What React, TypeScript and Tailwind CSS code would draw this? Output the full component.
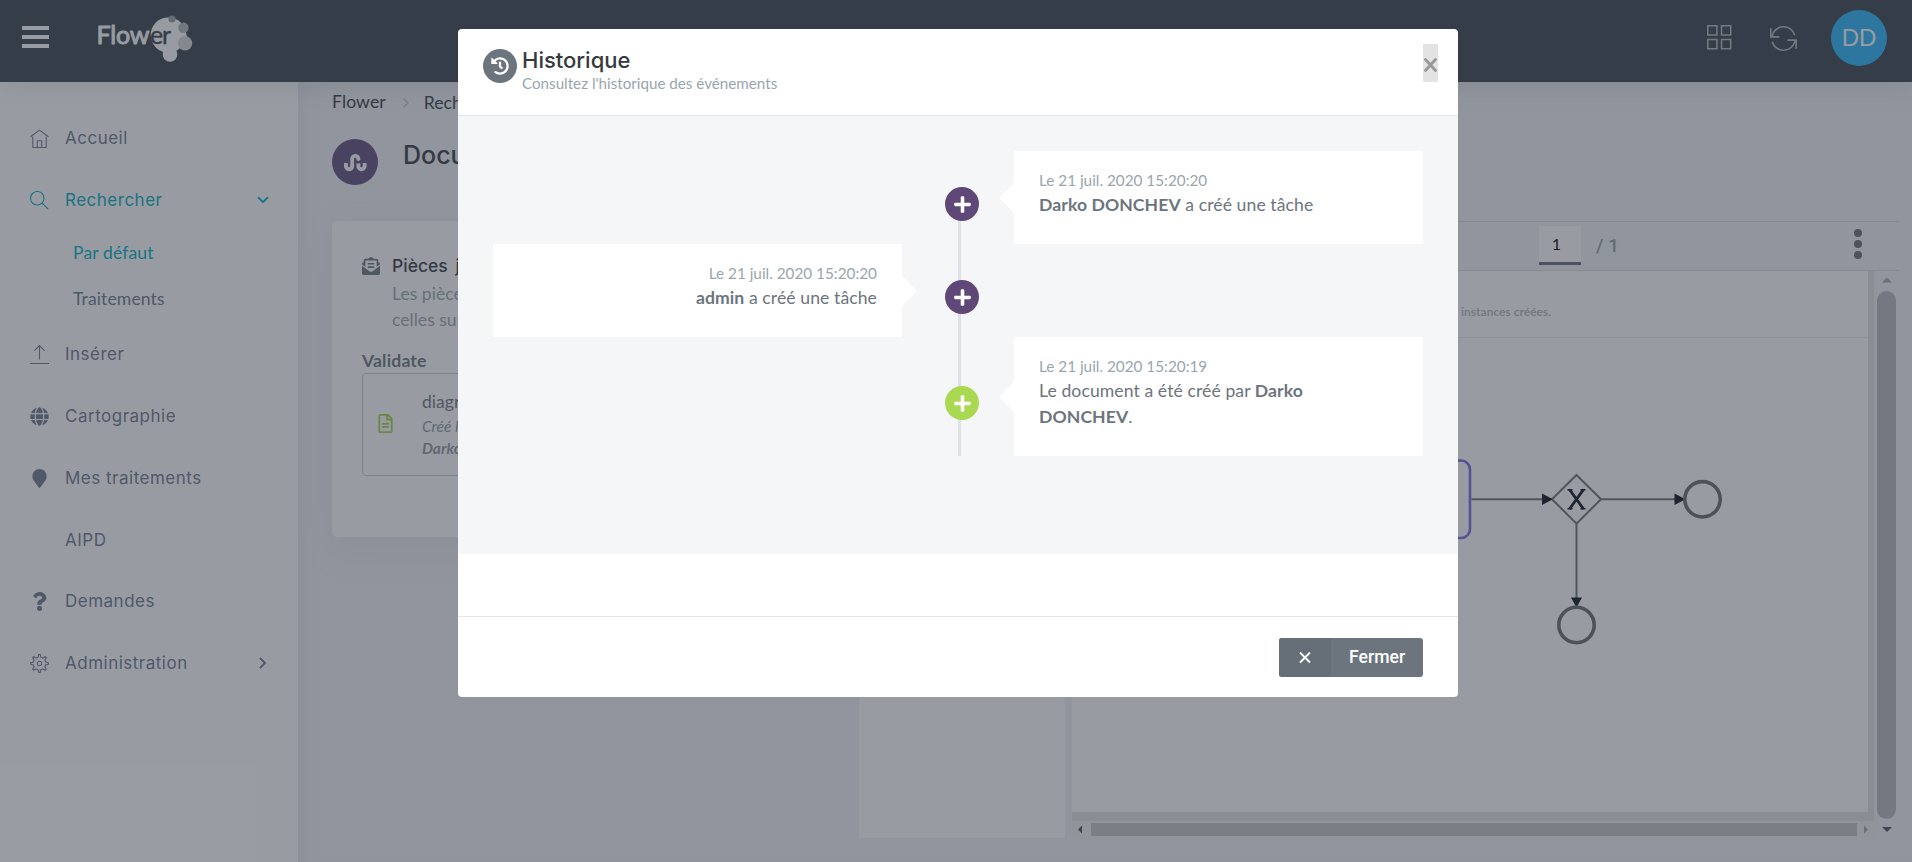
import React from 'react';
import {
  TfiHome,
  TfiSearch,
  TfiUpload,
  TfiSettings,
  TfiLayoutGrid2,
  TfiReload,
} from 'react-icons/tfi';
import {
  FaGlobe,
  FaMapMarker,
  FaQuestion,
  FaStumbleupon,
  FaEnvelopeOpenText,
  FaRegFileAlt,
  FaHistory,
  FaPlus,
} from 'react-icons/fa';

type NavItem = {
  label: string;
  icon: React.ReactNode;
  height: string;
  active?: boolean;
  chevron?: 'down' | 'right';
  children?: { label: string; active?: boolean }[];
};

const navItems: NavItem[] = [
  { label: 'Accueil', icon: <TfiHome size={19} />, height: 'h-[62px]' },
  {
    label: 'Rechercher',
    icon: <TfiSearch size={19} />,
    height: 'h-[62px]',
    active: true,
    chevron: 'down',
    children: [{ label: 'Par défaut', active: true }, { label: 'Traitements' }],
  },
  { label: 'Insérer', icon: <TfiUpload size={19} />, height: 'h-[62px]' },
  { label: 'Cartographie', icon: <FaGlobe size={19} />, height: 'h-[62px]' },
  { label: 'Mes traitements', icon: <FaMapMarker size={19} />, height: 'h-[62px]' },
  { label: 'AIPD', icon: null, height: 'h-[61px]' },
  { label: 'Demandes', icon: <FaQuestion size={19} />, height: 'h-[62px]' },
  { label: 'Administration', icon: <TfiSettings size={19} />, height: 'h-[62px]', chevron: 'right' },
];

function Logo() {
  return (
    <svg width="100" height="60" viewBox="0 0 100 60" className="ml-[47px]">
      <circle cx="72.3" cy="30" r="17.6" fill="#fff" />
      <circle cx="81" cy="32" r="10" fill="#fff" />
      <circle cx="74" cy="49.5" r="7.3" fill="#fff" />
      <circle cx="76" cy="14" r="3.6" fill="#969ca5" />
      <circle cx="87.4" cy="22.7" r="5.2" fill="#b4b6ba" />
      <circle cx="89" cy="38.3" r="7.2" fill="#d8d8d8" />
      <text x="0.500" y="38.500" textLength="53" fontSize="25" fill="#fff" stroke="#fff" strokeWidth="0.900" strokeLinejoin="round" className="font-['Lato',sans-serif]">
        Flow
      </text>
      <text x="54" y="38.500" textLength="21" fontSize="25" fill="#38414a" stroke="#38414a" strokeWidth="0.400" className="font-['Lato',sans-serif]">
        er
      </text>
    </svg>
  );
}

function Header() {
  return (
    <header className="relative z-10 flex h-[82px] shrink-0 items-start bg-[#38414a] shadow-[0_4px_24px_rgba(56,65,74,0.12)]">
      <div className="ml-[22px] mt-[26px] flex w-[27px] flex-col gap-[5px]">
        <span className="h-1 bg-white" />
        <span className="h-1 bg-white" />
        <span className="h-1 bg-white" />
      </div>
      <div className="mt-[5px]">
        <Logo />
      </div>
      <div className="ml-auto flex items-center pr-[25px] pt-[10px] text-[#b6b8bb]">
        <TfiLayoutGrid2 size={26} />
        <TfiReload size={27} className="ml-[37px]" />
        <span className="ml-[34px] flex size-[56px] items-center justify-center rounded-full bg-[#26b2f8] font-['Liberation_Sans',sans-serif] text-[24px] text-white">
          DD
        </span>
      </div>
    </header>
  );
}

function Chevron({ dir }: { dir: 'down' | 'right' }) {
  return (
    <svg width="12" height="12" viewBox="0 0 12 12" fill="none" stroke="currentColor" strokeWidth="1.9">
      <path d={dir === 'down' ? 'M1 3.2l5 5 5-5' : 'M3 1l5 5-5 5'} />
    </svg>
  );
}

function Sidebar() {
  return (
    <nav className="w-[298px] shrink-0 bg-white pt-[25px] font-['Inter',sans-serif] text-[17px] tracking-[0.5px] text-[#6e768e]">
      {navItems.map((item) => (
        <div key={item.label}>
          <div className={`flex items-center pl-[30px] pr-[29px] ${item.height} ${item.active ? 'text-[#00acc1]' : ''}`}>
            <span className="flex w-[19px] justify-center">{item.icon}</span>
            <span className="ml-4 pt-[2px]">{item.label}</span>
            {item.chevron && (
              <span className="ml-auto">
                <Chevron dir={item.chevron} />
              </span>
            )}
          </div>
          {item.children?.map((child) => (
            <div
              key={child.label}
              className={`flex h-[46px] items-center pb-[2px] pl-[73px] font-['Lato',sans-serif] text-[17.6px] tracking-[0.1px] ${child.active ? 'text-[#00acc1]' : ''}`}
            >
              {child.label}
            </div>
          ))}
        </div>
      ))}
    </nav>
  );
}

function AttachmentsCard() {
  return (
    <section className="mt-[36px] h-[316px] w-[500px] rounded-[5px] bg-white pl-[30px] pt-[30px] shadow-[0_12px_35px_rgba(154,161,171,0.15)]">
      <div className="flex h-[30px] items-center">
        <FaEnvelopeOpenText size={18} className="text-[#6c757d]" />
        <h2 className="ml-[12px] font-['Inter',sans-serif] text-[17.5px] font-medium text-[#343a40]">
          Pièces <span className="ml-[3px]">jointes</span>
        </h2>
      </div>
      <p className="ml-[30px] leading-[26px] text-[#98a6ad]">
        Les pièces
        <br />
        celles sur
      </p>
      <p className="mt-[15px] h-[26px] font-bold leading-[26px] tracking-[0.15px]">Validate</p>
      <div className="mt-[-1px] flex h-[103px] w-[440px] rounded border border-[#c5cbe0] pl-[13px]">
        <FaRegFileAlt size={19} className="mt-[40px] text-[#a3d44f]" />
        <div className="ml-[27px] pt-[15px]">
          <p className="leading-[26px]">diagramme</p>
          <p className="text-[15.5px] italic leading-[22px] text-[#8d979e]">
            Créé le
            <br />
            <b>Darko DONCHEV</b>
          </p>
        </div>
      </div>
    </section>
  );
}

function Diagram() {
  return (
    <svg width="410" height="220" viewBox="1458 440 410 220" fill="none" className="ml-auto">
      <rect x="1340" y="460.5" width="130" height="77.5" rx="9" stroke="#7a68e4" strokeWidth="2.6" />
      <g stroke="#6d7177" strokeWidth="2">
        <path d="M1471.500 499.300H1545" />
        <path d="M1601 499.300H1678" />
        <path d="M1576.500 524V600" />
        <path d="M1576.500 475l24.500 24.300-24.500 24.300-24.500-24.300z" />
      </g>
      <g fill="#0a0f1a">
        <path d="M1542 493.500l11 5.800-11 5.800z" />
        <path d="M1674.500 493.500l11 5.800-11 5.800z" />
        <path d="M1571 597.500h11l-5.500 10z" />
      </g>
      <path d="M1569.500 489.500l14 19.500M1583.500 489.500l-14 19.500" stroke="#0a0f1a" strokeWidth="2.900" />
      <path d="M1567.500 489.700h5M1580.500 489.700h5M1567.500 508.700h5M1580.500 508.700h5" stroke="#0a0f1a" strokeWidth="1.500" />
      <g stroke="#676a6e" strokeWidth="3.600">
        <circle cx="1702.500" cy="499.300" r="17.700" />
        <circle cx="1576.500" cy="625" r="17.700" />
      </g>
    </svg>
  );
}

function Viewer() {
  return (
    <section className="flex h-[618px] w-[827px] flex-col">
      <div className="flex h-[50px] items-start border-y border-[#dcdddf]">
        <div className="ml-[467px] mt-[4px] flex h-[39px] w-[42px] items-center justify-center border-b-[3px] border-[#676c74] bg-white pr-[7px] text-base text-black">
          1
        </div>
        <span className="ml-[15px] mt-[10px] font-['Roboto',sans-serif] text-[19px] font-medium leading-[28px] text-[#9a9ca0]">/ 1</span>
        <div className="ml-auto mr-[37px] mt-[7px] flex flex-col gap-[3px]">
          <i className="size-2 rounded-full bg-[#676c74]" />
          <i className="size-2 rounded-full bg-[#676c74]" />
          <i className="size-2 rounded-full bg-[#676c74]" />
        </div>
      </div>
      <div className="flex flex-1">
        <div className="flex flex-1 flex-col">
          <div className="flex h-[550px] border-b-[9px] border-r-[6px] border-[#e2e2e2] bg-white">
            <div className="flex flex-1 flex-col">
              <div className="flex h-[67px] items-center border-b border-[#edeef0] pl-[389px] pt-[16px] text-[12px] font-bold text-[#b8bac0]">
                instances créées.
              </div>
              <div className="pt-[102px]">
                <Diagram />
              </div>
            </div>
          </div>
          <div className="flex h-[17px] items-center bg-[#f1f1f1]">
            <svg width="19" height="13" viewBox="0 0 19 13" fill="#505050">
              <path d="M10 2.500v8L6 6.500z" />
            </svg>
            <div className="h-[13px] w-[766px] bg-[#c4c4c4]" />
            <svg width="17" height="13" viewBox="0 0 17 13" fill="#a3a3a3">
              <path d="M7 2.500v8l4-4z" />
            </svg>
          </div>
        </div>
        <div className="flex w-[25px] flex-col items-center bg-[#f1f1f4]">
          <svg width="25" height="20" viewBox="0 0 25 20" fill="#a3a5ab">
            <path d="M8 11.500h10L13 6.500z" />
          </svg>
          <div className="w-[19px] flex-1 rounded-full bg-[#b4b6be]" />
          <svg width="25" height="20" viewBox="0 0 25 20" fill="#50525a">
            <path d="M8 8h10l-5 5z" />
          </svg>
        </div>
      </div>
    </section>
  );
}

function Content() {
  return (
    <main className="flex flex-1 bg-[#f0f1f5] pl-[34px] shadow-[inset_20px_0_25px_-20px_rgba(100,105,120,0.12)]">
      <div className="w-[527px] shrink-0">
        <div className="flex h-[40px] items-center pt-[1px] text-[#343a40]">
          <span className="tracking-[0.1px]">Flower</span>
          <span className="ml-[16px] text-[#c4c8d0]">
            <svg width="8" height="12" viewBox="0 0 8 12" fill="none" stroke="currentColor" strokeWidth="1.6">
              <path d="M1.500 1.500l4.500 4.500-4.500 4.500" />
            </svg>
          </span>
          <span className="ml-[14px] pt-[2px]">Rechercher</span>
        </div>
        <div className="mt-[17px] flex h-[46px] items-start">
          <span className="flex size-[46px] items-center justify-center rounded-full bg-[#604a7b] text-white">
            <FaStumbleupon size={23} />
          </span>
          <h1 className="-mt-[1px] ml-[25px] font-['Inter',sans-serif] text-[25px] font-medium leading-[34px] text-[#343a40]">Document</h1>
        </div>
        <AttachmentsCard />
      </div>
      <div className="mt-[139px] flex h-[618px]">
        <div className="mr-[7px] mt-[50px] h-[567px] w-[206px] bg-white" />
        <Viewer />
      </div>
    </main>
  );
}

type TimelineEvent = {
  side: 'left' | 'right';
  color: string;
  date: string;
  body: React.ReactNode;
};

const events: TimelineEvent[] = [
  {
    side: 'right',
    color: 'bg-[#5f4778]',
    date: 'Le 21 juil. 2020 15:20:20',
    body: (
      <>
        <b>Darko DONCHEV</b> a créé une tâche
      </>
    ),
  },
  {
    side: 'left',
    color: 'bg-[#5f4778]',
    date: 'Le 21 juil. 2020 15:20:20',
    body: (
      <>
        <b>admin</b> a créé une tâche
      </>
    ),
  },
  {
    side: 'right',
    color: 'bg-[#a8d951]',
    date: 'Le 21 juil. 2020 15:20:19',
    body: (
      <>
        Le document a été créé par <b>Darko</b>
        <br />
        <b>DONCHEV</b>.
      </>
    ),
  },
];

function TimelineRow({ event, first }: { event: TimelineEvent; first: boolean }) {
  const right = event.side === 'right';
  return (
    <div className="grid grid-cols-[409px_112px_409px]">
      <div className="relative col-start-2 row-start-1 flex items-center pl-[43px] pt-[13px]">
        <span className={`absolute bottom-0 left-[56px] w-[3px] bg-[#dee2e6] ${first ? 'top-[53px]' : 'top-0'}`} />
        <span className={`relative flex size-[34px] items-center justify-center rounded-full text-white ${event.color}`}>
          <FaPlus size={19} />
        </span>
      </div>
      <div
        className={`relative row-start-1 bg-white px-[25px] pb-[26px] pt-[17px] ${right ? 'col-start-3' : 'col-start-1 text-right'}`}
      >
        <span
          className={`absolute top-1/2 -mt-[15px] border-y-[15px] border-y-transparent ${
            right ? 'right-full border-r-[15px] border-r-white' : 'left-full border-l-[15px] border-l-white'
          }`}
        />
        <p className="text-[15.3px] leading-[24px] text-[#98a6ad]">{event.date}</p>
        <p className="leading-[26px] tracking-[0.08px] text-[#6c757d]">{event.body}</p>
      </div>
    </div>
  );
}

function HistoryModal() {
  return (
    <div role="dialog" className="flex h-[668px] w-[1000px] flex-col overflow-hidden rounded-[4px] bg-white">
      <div className="flex h-[87px] items-start border-b border-[#e5e8eb] pl-[25px] pr-[20px]">
        <span className="mt-[20px] flex size-[34px] items-center justify-center rounded-full bg-[#6c757d] text-white">
          <FaHistory size={18} />
        </span>
        <div className="ml-[5px] pt-[17px]">
          <h4 className="font-['Inter',sans-serif] text-[22px] font-medium leading-[28px] text-[#343a40]">Historique</h4>
          <p className="-mt-[2px] text-[15.2px] leading-[22px] text-[#98a6ad]">Consultez l'historique des événements</p>
        </div>
        <button className="ml-auto mt-[15px] flex h-[38px] w-[15px] items-center justify-center bg-[#e3e3e3] pt-[4px] text-[#989898]">
          <svg width="13" height="14" viewBox="0 0 13 14" stroke="currentColor" strokeWidth="2.800" strokeLinecap="round">
            <path d="M1.500 1.500l10 11M11.500 1.500l-10 11" />
          </svg>
        </button>
      </div>
      <div className="h-[438px] bg-[#f4f6f8] px-[35px] pt-[35px]">
        {events.map((event, i) => (
          <TimelineRow key={i} event={event} first={i === 0} />
        ))}
      </div>
      <div className="h-[62px]" />
      <div className="flex flex-1 items-start justify-end border-t border-[#e5e8eb] pr-[35px] pt-[21px]">
        <button className="flex h-[39px] w-[144px] overflow-hidden rounded-[3px] bg-[#6c757d] text-white">
          <span className="flex w-[52px] items-center justify-center bg-[#666e77]">
            <svg width="12" height="12" viewBox="0 0 12 12" stroke="currentColor" strokeWidth="1.900">
              <path d="M1 0.500l10 10M11 0.500L1 10.500" />
            </svg>
          </span>
          <span className="flex flex-1 items-center pb-px pl-[18px] font-['Roboto',sans-serif] text-[17.6px] font-medium">Fermer</span>
        </button>
      </div>
    </div>
  );
}

export default function App() {
  return (
    <div className="relative flex h-[862px] w-[1912px] flex-col overflow-hidden font-['Lato',sans-serif] text-[17.6px] text-[#6c757d]">
      <Header />
      <div className="flex flex-1">
        <Sidebar />
        <Content />
      </div>
      <div className="absolute inset-0 z-20 flex items-start bg-[#323a46]/50 pl-[458px] pt-[29px]">
        <HistoryModal />
      </div>
    </div>
  );
}
